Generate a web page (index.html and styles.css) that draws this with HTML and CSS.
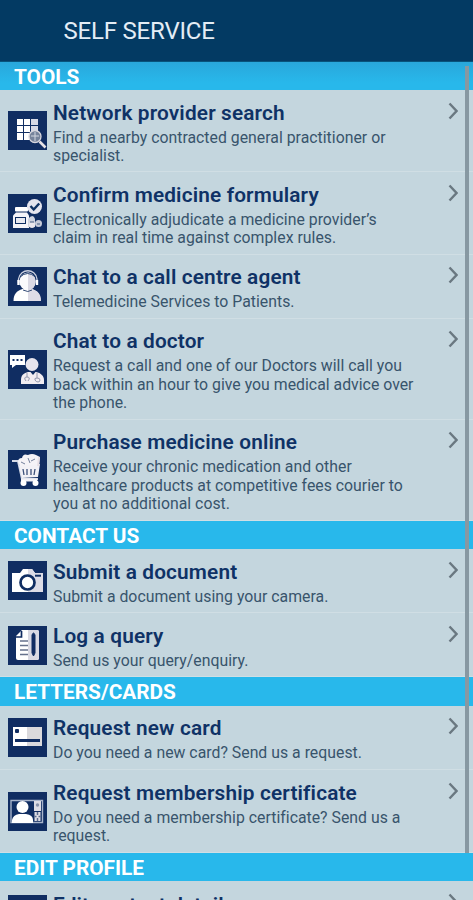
FILE: index.html
```html
<!DOCTYPE html>
<html lang="en">
<head>
<meta charset="utf-8">
<title>Self Service</title>
<link rel="stylesheet" href="styles.css">
</head>
<body>
<div class="app">
  <header class="header"><h1>SELF SERVICE</h1></header>
  <main class="content">
    <h2 class="section section-first">TOOLS</h2>
    <article class="row two">
      <svg class="icon" viewBox="0 0 39 39"><g fill="#fff"><path d="M9 8h6v6H9zM16 8h6v6h-6zM9 15h6v6H9zM16 15h6v6h-6zM9 22h6v7H9zM16 22h6v7h-6z"/><path fill="#d6d8e5" d="M23 8h7v6h-7zM23 15h7v6h-7zM23 22h7v7h-7z"/></g><circle cx="27" cy="25.500" r="6" fill="#77849c" stroke="#d9d8df" stroke-width="1.300"/><path d="M23 25h8M27 21v9" stroke="#d3d7e1"/><path d="M31.500 30.500l6 6" stroke="#e7e2e5" stroke-width="2.600"/></svg>
      <div class="copy"><h3>Network provider search</h3><p>Find a nearby contracted general practitioner or<br>specialist.</p></div>
      <svg class="chevron" viewBox="0 0 10 18"><path d="M1.500 1.500L8.500 9l-7 7.500"/></svg>
    </article>
    <article class="row two">
      <svg class="icon" viewBox="0 0 39 39"><rect x="7" y="13" width="13" height="4.500" rx="1" fill="#fff"/><path d="M8 18.500h11l2 3V34H5V21.500z" fill="#f4f3f8"/><path d="M7 23h11v7H7z" fill="#0d2c61"/><path d="M8 24h9v5H8z" fill="#e8e9f1"/><path d="M20 25q5-6 7 0v8h-7z" fill="#cfd3df"/><circle cx="24" cy="31" r="3" fill="#ece8ed"/><circle cx="30.500" cy="29.500" r="3.500" fill="#c7cbd8"/><path d="M22 28h4M29 30h3" stroke="#455a80"/><circle cx="26.500" cy="12.500" r="7.500" fill="#e5e5ee"/><path d="M22.500 12l3.200 3.500 5.500-6" fill="none" stroke="#103263" stroke-width="2.400"/></svg>
      <div class="copy"><h3>Confirm medicine formulary</h3><p>Electronically adjudicate a medicine provider’s<br>claim in real time against complex rules.</p></div>
      <svg class="chevron" viewBox="0 0 10 18"><path d="M1.500 1.500L8.500 9l-7 7.500"/></svg>
    </article>
    <article class="row one">
      <svg class="icon" viewBox="0 0 39 39"><path d="M5.500 34c0-7 3-10 9-12h9c6 2 9 5 9 12z" fill="#fff"/><path d="M20 22h4c6 2 9 5 9 12H20z" fill="#dedce6"/><ellipse cx="19.500" cy="14.500" rx="8" ry="9" fill="#fafafc"/><path d="M20 5.500c10 1 10 17 0 18z" fill="#dad9e4"/><path d="M10.500 16V12c2-11 17-11 18.500 0v4" fill="none" stroke="#cdd2e1" stroke-width="1.300"/><path d="M12 10q7.500-7 15.500 0" fill="none" stroke="#254272"/><path d="M10.500 13v5M29 13v5" stroke="#fff" stroke-width="2.400"/><path d="M15 23q5 3 9 0" fill="none" stroke="#344b76"/></svg>
      <div class="copy"><h3>Chat to a call centre agent</h3><p>Telemedicine Services to Patients.</p></div>
      <svg class="chevron" viewBox="0 0 10 18"><path d="M1.500 1.500L8.500 9l-7 7.500"/></svg>
    </article>
    <article class="row three">
      <svg class="icon" viewBox="0 0 39 39"><path d="M2 5h15v10H8l-4 3v-3H2z" fill="#fff"/><path d="M4.500 9h2v2h-2zM8.500 9h2v2h-2zM12.500 9h2v2h-2z" fill="#102d62"/><circle cx="24" cy="14.500" r="6.500" fill="#e7e5ed"/><path d="M13 34v-4c0-5 3-7 7-8h8c5 1 8 4 8 8v4z" fill="#f1edf2"/><path d="M22.500 22l2.500 3 2.500-3" fill="#0e2e60"/><path d="M19 23v4M18 31q-3-4 1-4t1 4M29 23v5m0 0q3 0 3 2t-2 2-3-2 2-2" fill="none" stroke="#9297ad"/></svg>
      <div class="copy"><h3>Chat to a doctor</h3><p>Request a call and one of our Doctors will call you<br>back within an hour to give you medical advice over<br>the phone.</p></div>
      <svg class="chevron" viewBox="0 0 10 18"><path d="M1.500 1.500L8.500 9l-7 7.500"/></svg>
    </article>
    <article class="row three">
      <svg class="icon" viewBox="0 0 39 39"><path d="M4 11h6l4 18h16" fill="none" stroke="#d6dae6" stroke-width="2"/><path d="M10 12q0-4 4-4 1-5 6-3 4-2 8 0l4 2-1 9H12z" fill="#f5f3f7"/><path d="M20 8l2 5M27 9l-4 2M13 12l4 2" stroke="#73809c"/><path d="M11 16l21-2-2 13-16 1z" fill="#f2f1f6"/><path d="M15 19l1 6M19 19v6M23 19v6M27 19l-1 6" fill="none" stroke="#3c507a" stroke-width="1.300"/><path d="M13 30h16" stroke="#f2f1f6" stroke-width="3"/><circle cx="15.500" cy="33" r="3" fill="#fff"/><circle cx="27.500" cy="33" r="3" fill="#fff"/><path d="M31 7l-1 9" stroke="#e8dfe5" stroke-width="2"/></svg>
      <div class="copy"><h3>Purchase medicine online</h3><p>Receive your chronic medication and other<br>healthcare products at competitive fees courier to<br>you at no additional cost.</p></div>
      <svg class="chevron" viewBox="0 0 10 18"><path d="M1.500 1.500L8.500 9l-7 7.500"/></svg>
    </article>
    <h2 class="section">CONTACT US</h2>
    <article class="row one">
      <svg class="icon" viewBox="0 0 39 39"><path d="M4 12h8l3-4h9l3 4h8v19H4z" fill="#fff"/><path d="M20 8h4l3 4h8v19H20z" fill="#dddce6"/><circle cx="19.500" cy="21.500" r="7" fill="#fff" stroke="#102d62" stroke-width="2.700"/><path d="M27 14.700h6" stroke="#102d62" stroke-width="2"/></svg>
      <div class="copy"><h3>Submit a document</h3><p>Submit a document using your camera.</p></div>
      <svg class="chevron" viewBox="0 0 10 18"><path d="M1.500 1.500L8.500 9l-7 7.500"/></svg>
    </article>
    <article class="row one">
      <svg class="icon" viewBox="0 0 39 39"><path d="M14 4h15q2 0 2 2v26q0 2-2 2H10q-2 0-2-2V10z" fill="#fff"/><path d="M20 4h9q2 0 2 2v26q0 2-2 2h-9z" fill="#d9d9e3"/><path d="M13.500 5v6H8" fill="none" stroke="#102d62" stroke-width="1.700"/><path d="M12 15h8M12 19.500h8M12 24h8M12 28.500h8" stroke="#66728d" stroke-width="1.400"/><path d="M24 9q1.500-4 3 0v18l-1.500 3L24 27z" fill="#102d62" stroke="#102d62"/></svg>
      <div class="copy"><h3>Log a query</h3><p>Send us your query/enquiry.</p></div>
      <svg class="chevron" viewBox="0 0 10 18"><path d="M1.500 1.500L8.500 9l-7 7.500"/></svg>
    </article>
    <h2 class="section">LETTERS/CARDS</h2>
    <article class="row one">
      <svg class="icon" viewBox="0 0 39 39"><path d="M5 9h29v19H5z" fill="#fff"/><path d="M19 9h15v19H19z" fill="#dad9dc"/><rect x="7" y="11" width="4" height="4" rx="1" fill="#102d62"/><path d="M7 22.500h25" stroke="#102d62" stroke-width="3"/></svg>
      <div class="copy"><h3>Request new card</h3><p>Do you need a new card? Send us a request.</p></div>
      <svg class="chevron" viewBox="0 0 10 18"><path d="M1.500 1.500L8.500 9l-7 7.500"/></svg>
    </article>
    <article class="row two">
      <svg class="icon" viewBox="0 0 39 39"><path d="M3 8.500h31.500v22H3z" fill="none" stroke="#a8b4cb" stroke-width="1.400"/><circle cx="14.500" cy="15" r="6" fill="#fff"/><path d="M4 31v-3q1-5 7-6h7q7 1 7 6v3z" fill="#fff"/><path d="M26 9h7v10h-7z" fill="#dddce4"/><circle cx="29.500" cy="13" r="1.700" fill="#8992aa"/><path d="M26.500 20h6v9h-6z" fill="#dddce4"/><path d="M29.500 20v3m0 3v3M26.500 24.500h2m2 0h2" stroke="#5b6b8d" stroke-width="1.500"/></svg>
      <div class="copy"><h3>Request membership certificate</h3><p>Do you need a membership certificate? Send us a<br>request.</p></div>
      <svg class="chevron" viewBox="0 0 10 18"><path d="M1.500 1.500L8.500 9l-7 7.500"/></svg>
    </article>
    <h2 class="section">EDIT PROFILE</h2>
    <article class="row one last">
      <svg class="icon" viewBox="0 0 39 39"></svg>
      <div class="copy"><h3>Edit contact details</h3></div>
      <svg class="chevron" viewBox="0 0 10 18"><path d="M1.500 1.500L8.500 9l-7 7.500"/></svg>
    </article>
    <div class="scrollbar"></div>
  </main>
</div>
</body>
</html>
```
FILE: styles.css
```css
* { box-sizing: border-box; }
body { margin: 0; overflow: hidden; background: #c4d6de; font-family: Roboto, sans-serif; }
h1, h2, h3, p { margin: 0; }
.app { height: 900px; overflow: hidden; }
.header { height: 61.500px; background: #033a63; padding: 16px 0 0 63.500px; border-bottom: 1px solid #08537b; }
h1 { color: #e3edf6; font-size: 24px; font-weight: 400; line-height: 30px; letter-spacing: -.2px; white-space: nowrap; }
.content { position: relative; }
.section { height: 28.500px; padding-left: 14px; background: #28b8eb; color: #fff; font-size: 20.800px; font-weight: 700; line-height: 30px; white-space: nowrap; }
.section-first { background: linear-gradient(#29a7db, #28b8eb 75%); }
.row { display: flex; align-items: center; padding-left: 7.500px; border-bottom: 1px solid #d0dee4; background: #c4d6de; }
.one { height: 64.200px; }
.two { height: 82.400px; }
.three { height: 100.800px; }
.icon { flex: none; width: 39px; height: 39px; margin-top: .5px; background: #102d62; }
.copy { align-self: flex-start; flex: 1; min-width: 0; padding: 10.500px 0 0 6.500px; white-space: nowrap; }
h3 { color: #0f3266; font-size: 20.800px; font-weight: 600; line-height: 25px; letter-spacing: .15px; }
p { color: #38546c; font-size: 15.800px; line-height: 18.400px; letter-spacing: .02px; margin-top: 3px; }
.chevron { align-self: flex-start; flex: none; width: 10px; height: 18px; margin: 11.500px 15px 0 0; }
.chevron path { fill: none; stroke: #6a7881; stroke-width: 2.400; }
.last .icon { margin-top: 3px; }
.last .copy { padding-top: 12px; }
.scrollbar { position: absolute; top: 4px; right: 4px; width: 4px; height: 787px; background: #8798a2; }
```
